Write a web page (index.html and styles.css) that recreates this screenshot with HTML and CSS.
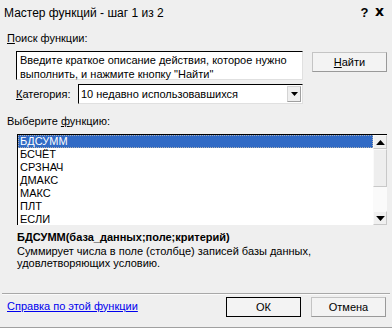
FILE: index.html
```html
<!DOCTYPE html>
<html>
<head>
<meta charset="utf-8">
<link rel="stylesheet" href="styles.css">
</head>
<body>

<div class="dialog">
  <div class="titlebar">
    <span class="title">Мастер функций - шаг 1 из 2</span>
    <span class="tbtn">?</span>
    <span class="tbtn close">x</span>
  </div>

  <div class="lbl top"><u>П</u>оиск функции:</div>
  <div class="searchrow">
    <div class="searchbox">Введите краткое описание действия, которое нужно<br>выполнить, и нажмите кнопку "Найти"</div>
    <div class="btn"><u>Н</u>айти</div>
  </div>

  <div class="catrow">
    <span class="catlbl"><u>К</u>атегория:</span>
    <div class="select">
      <span class="selval">10 недавно использовавшихся</span>
      <span class="selarrow"><svg width="7" height="4" viewBox="0 0 7 4"><path d="M0 0h7L3.5 4z" fill="#000"/></svg></span>
    </div>
  </div>

  <div class="lbl pick">Выберите <u>ф</u>ункцию:</div>
  <div class="list">
    <div class="items">
      <div class="item sel">БДСУММ</div>
      <div class="item">БСЧЁТ</div>
      <div class="item">СРЗНАЧ</div>
      <div class="item">ДМАКС</div>
      <div class="item">МАКС</div>
      <div class="item">ПЛТ</div>
      <div class="item">ЕСЛИ</div>
    </div>
    <div class="scroll">
      <div class="sbtn"><svg width="7" height="4" viewBox="0 0 7 4"><path d="M3.5 0L7 4H0z" fill="#000"/></svg></div>
      <div class="thumb"></div>
      <div class="track"></div>
      <div class="sbtn"><svg width="7" height="4" viewBox="0 0 7 4"><path d="M0 0h7L3.5 4z" fill="#000"/></svg></div>
    </div>
  </div>

  <div class="sig">БДСУММ(база_данных;поле;критерий)</div>
  <div class="desc">Суммирует числа в поле (столбце) записей базы данных,<br>удовлетворяющих условию.</div>

  <div class="sep"></div>

  <div class="footer">
    <a class="help" href="#">Справка по этой функции</a>
    <div class="btn default">ОК</div>
    <div class="btn">Отмена</div>
  </div>
</div>

</body>
</html>
```

FILE: styles.css
```css
body {
  margin: 0;
  background: #efefef;
  font-family: "Liberation Sans", Arial, sans-serif;
  font-size: 11px;
  color: #000;
}

.dialog {
  width: 392px;
  height: 327px;
  border-bottom: 1px solid #a0a0a0;
}

u {
  text-decoration: underline;
  text-underline-offset: 1px;
}

.titlebar {
  height: 24px;
  display: flex;
  align-items: center;
  padding: 0 5px 0 4px;
  font-size: 12px;
}

.title {
  flex: 1;
  padding-top: 1px;
}

.tbtn {
  font-weight: bold;
  font-size: 13px;
  width: 15px;
  text-align: center;
}

.tbtn.close {
  font-family: "DejaVu Sans", sans-serif;
  font-size: 14px;
  margin-top: -2px;
}

.lbl {
  padding-left: 7px;
  height: 14px;
  line-height: 14px;
}

.lbl.top {
  margin-top: 7px;
}

.lbl.pick {
  margin-top: 10px;
}

.searchrow {
  display: flex;
  margin: 6px 0 0 16px;
  gap: 9px;
}

.searchbox {
  width: 287px;
  height: 29px;
  box-sizing: border-box;
  background: #fff;
  border-top: 1px solid #000;
  border-left: 1px solid #000;
  border-right: 1px solid #e0e0e0;
  border-bottom: 1px solid #e0e0e0;
  padding: 1px 3px;
  line-height: 14px;
}

.btn {
  width: 75px;
  height: 20px;
  box-sizing: border-box;
  border: 1px solid #c4c4c4;
  border-right-color: #999;
  border-bottom-color: #999;
  background: #f3f3f3;
  display: flex;
  align-items: center;
  justify-content: center;
}

.searchrow .btn {
  margin-top: 1px;
}

.catrow {
  display: flex;
  align-items: center;
  margin: 4px 0 0 16px;
}

.catlbl {
  width: 62px;
}

.select {
  width: 225px;
  height: 20px;
  box-sizing: border-box;
  background: #fff;
  border-top: 1px solid #000;
  border-left: 1px solid #000;
  border-right: 1px solid #e0e0e0;
  border-bottom: 1px solid #e0e0e0;
  display: flex;
  align-items: center;
}

.selval {
  flex: 1;
  padding-left: 2px;
}

.selarrow {
  width: 14px;
  height: 16px;
  margin-right: 1px;
  background: #efefef;
  border: 1px solid #d4d4d4;
  border-right-color: #a0a0a0;
  border-bottom-color: #a0a0a0;
  box-sizing: border-box;
  display: flex;
  align-items: center;
  justify-content: center;
}

.list {
  display: flex;
  margin: 6px 0 0 17px;
  width: 370px;
  height: 91px;
  background: #fff;
  border-top: 1px solid #000;
  border-left: 1px solid #000;
  box-sizing: border-box;
}

.items {
  flex: 1;
}

.item {
  height: 13px;
  line-height: 13px;
  padding-left: 2px;
}

.item.sel {
  background: #316ac5;
  color: #fff;
  outline: 1px dotted #b0b0b0;
  outline-offset: -1px;
}

.scroll {
  width: 14px;
  display: flex;
  flex-direction: column;
  background: #f6f6f6;
}

.sbtn {
  height: 14px;
  box-sizing: border-box;
  background: #f0f0f0;
  border: 1px solid #fafafa;
  border-right-color: #c8c8c8;
  border-bottom-color: #c8c8c8;
  display: flex;
  align-items: center;
  justify-content: center;
}

.sbtn svg {
  width: 9px;
  height: 5px;
}

.thumb {
  height: 38px;
  box-sizing: border-box;
  background: #eeeeee;
  border: 1px solid #fafafa;
  border-right-color: #c8c8c8;
  border-bottom-color: #c8c8c8;
}

.track {
  flex: 1;
  background-color: #fafafa;
  background-image: radial-gradient(#e0e0e0 0.6px, transparent 0.7px);
  background-size: 2px 2px;
}

.sig {
  font-weight: bold;
  margin: 5px 0 0 17px;
  line-height: 14px;
}

.desc {
  margin: 1px 0 0 17px;
  line-height: 12px;
}

.sep {
  margin: 24px 2px 0 2px;
  height: 0;
  border-top: 1px solid #a8a8a8;
  border-bottom: 1px solid #fafafa;
}

.footer {
  display: flex;
  align-items: center;
  margin-top: 2px;
  padding-left: 7px;
  gap: 10px;
}

.help {
  flex: 1;
  color: #0000ee;
  margin-top: -3px;
}

.footer .btn {
  height: 20px;
}

.footer .btn:last-child {
  margin-right: 6px;
}

.btn.default {
  border: 1px solid #000;
}
```
